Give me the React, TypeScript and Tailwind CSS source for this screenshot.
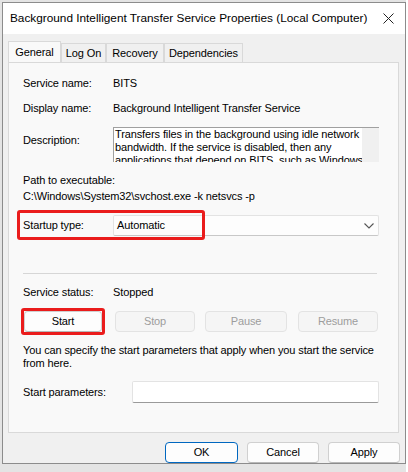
import React from 'react';

const font = { fontFamily: '"Liberation Sans", Arial, sans-serif' };

function Tab({ label, active, w }: { label: string; active?: boolean; w: string }) {
  return active ? (
    <div className={`${w} h-[21px] -mb-px z-10 bg-[#f9f9f9] border border-b-0 border-[#d9d9d9] flex items-center justify-center text-[11px] tracking-[-0.12px] text-black`}>
      {label}
    </div>
  ) : (
    <div className={`${w} h-[19px] mt-[2px] bg-[#f0f0f0] border border-b-0 border-[#d9d9d9] flex items-center justify-center text-[11px] tracking-[-0.12px] text-black`}>
      {label}
    </div>
  );
}

function Btn({ label, disabled, w = 'w-[80px]' }: { label: string; disabled?: boolean; w?: string }) {
  return (
    <div
      className={`${w} h-[21px] rounded-[4px] border flex items-center justify-center text-[11px] tracking-[-0.12px] ${
        disabled ? 'bg-[#f5f5f5] border-[#e3e3e3] text-[#9d9d9d]' : 'bg-[#fdfdfd] border-[#d0d0d0] border-b-[#b8b8b8] text-black'
      }`}
    >
      {label}
    </div>
  );
}

export default function App() {
  return (
    <div className="w-[408px] h-[472px] bg-[#e4e4e4] flex overflow-hidden" style={font}>
      <div className="ml-[2px] mt-[2px] w-[404px] h-[462px] border border-[#8c8c8c] bg-[#f0f0f0] flex flex-col shrink-0">
        {/* title bar */}
        <div className="h-[31px] bg-white flex items-center justify-between pl-[7px] pr-[10px]">
          <span className="text-[11.8px] text-black whitespace-nowrap">Background Intelligent Transfer Service Properties (Local Computer)</span>
          <svg width="11" height="11" viewBox="0 0 11 11" className="mr-[1px] shrink-0">
            <path d="M0.5 0.5 L10.5 10.5 M10.5 0.5 L0.5 10.5" stroke="#222" strokeWidth="1" />
          </svg>
        </div>

        {/* tabs */}
        <div className="flex pl-[5px] pt-[7px]">
          <Tab label="General" active w="w-[53px]" />
          <Tab label="Log On" w="w-[45px]" />
          <Tab label="Recovery" w="w-[58px]" />
          <Tab label="Dependencies" w="w-[79px]" />
        </div>

        {/* panel */}
        <div className="ml-[5px] w-[391px] h-[371px] bg-[#f9f9f9] border border-[#d9d9d9] flex flex-col pl-[14px] text-[11px] tracking-[-0.12px] text-black">
          <div className="flex h-[14px] items-center mt-[13px]">
            <span className="w-[90px]">Service name:</span>
            <span>BITS</span>
          </div>
          <div className="flex h-[14px] items-center mt-[11px]">
            <span className="w-[90px]">Display name:</span>
            <span>Background Intelligent Transfer Service</span>
          </div>
          <div className="flex mt-[12px]">
            <span className="w-[90px] mt-[5px]">Description:</span>
            <div className="w-[266px] h-[35px] border-t border-l border-[#a0a0a0] bg-white flex overflow-hidden">
              <div className="flex-1 pl-[1px] leading-[13px] whitespace-nowrap overflow-hidden">
                <div>Transfers files in the background using idle network</div>
                <div>bandwidth. If the service is disabled, then any</div>
                <div>applications that depend on BITS, such as Windows</div>
              </div>
              <div className="w-[17px] shrink-0 bg-[#f0f0f0]" />
            </div>
          </div>
          <div className="h-[14px] flex items-center mt-[11px]">Path to executable:</div>
          <div className="h-[14px] flex items-center mt-[2px]">C:\Windows\System32\svchost.exe -k netsvcs -p</div>

          {/* startup type */}
          <div className="relative flex items-center mt-[12px] h-[21px]">
            <span className="w-[90px]">Startup type:</span>
            <div className="w-[266px] h-[21px] bg-[#fdfdfd] border border-[#e3e3e3] border-b-[#c8c8c8] rounded-[2px] flex items-center justify-between pl-[3px] pr-[4px]">
              <span>Automatic</span>
              <svg width="10" height="6" viewBox="0 0 10 6">
                <path d="M0.5 0.5 L5 5 L9.5 0.5" stroke="#555" strokeWidth="1.1" fill="none" />
              </svg>
            </div>
            <div className="absolute left-[-6px] top-[-5px] w-[188px] h-[30px] border-[3px] border-[#ea1c1c] rounded-[3px]" />
          </div>

          <div className="w-[354px] h-px bg-[#d6d6d6] mt-[37px]" />

          <div className="flex h-[14px] items-center mt-[11px]">
            <span className="w-[90px]">Service status:</span>
            <span>Stopped</span>
          </div>

          {/* control buttons */}
          <div className="flex mt-[12px] h-[21px]">
            <div className="relative ml-[1px]">
              <Btn label="Start" w="w-[78px]" />
              <div className="absolute left-[-3px] top-[-3px] w-[84px] h-[27px] border-[3px] border-[#ea1c1c] rounded-[3px]" />
            </div>
            <div className="ml-[13px]"><Btn label="Stop" disabled /></div>
            <div className="ml-[10px]"><Btn label="Pause" disabled w="w-[82px]" /></div>
            <div className="ml-[11px]"><Btn label="Resume" disabled /></div>
          </div>

          <div className="mt-[12px] leading-[13px] w-[360px]">
            You can specify the start parameters that apply when you start the service from here.
          </div>

          <div className="flex items-center mt-[11px]">
            <span className="w-[109px]">Start parameters:</span>
            <div className="w-[247px] h-[22px] bg-white border border-[#e3e3e3] border-b-[#9a9a9a] rounded-[2px]" />
          </div>
        </div>

        {/* footer buttons */}
        <div className="flex justify-end gap-[9px] pr-[5px] mt-[9px]">
          <div className="w-[73px] h-[21px] rounded-[4px] border border-[#0067c0] bg-[#fdfdfd] flex items-center justify-center text-[11px] tracking-[-0.12px]">OK</div>
          <Btn label="Cancel" w="w-[72px]" />
          <Btn label="Apply" w="w-[72px]" />
        </div>
      </div>
      <div className="w-[2px] h-full bg-white" />
    </div>
  );
}
